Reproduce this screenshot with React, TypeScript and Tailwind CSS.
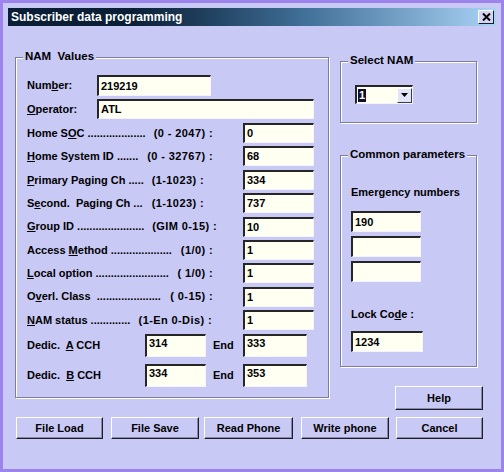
import React from "react";

const face = "bg-[#c9c9f6]";

const Field = ({ value, className, top }: { value?: string; className: string; top?: boolean }) => (
  <div
    className={`${className} flex ${top ? "items-start pt-[1px]" : "items-center"} bg-[#fffff2] border-t-2 border-l-2 border-r border-b border-t-[#262626] border-l-[#262626] border-r-[#f4f4fc] border-b-[#f4f4fc] pl-[2px] leading-[13px]`}
  >
    {value}
  </div>
);

const Group = ({ title, className, children }: { title: string; className: string; children?: React.ReactNode }) => (
  <div
    className={`${className} relative border border-[#7c7c9c] shadow-[1px_1px_0_#ffffff,inset_1px_1px_0_#ffffff]`}
  >
    <span className={`absolute -top-[9px] left-[7px] px-[2px] ${face} text-[11.5px] leading-[14px] whitespace-pre`}>
      {title}
    </span>
    {children}
  </div>
);

const Btn = ({ label, className }: { label: string; className: string }) => (
  <button
    className={`${className} ${face} flex items-center justify-center border border-t-white border-l-white border-r-[#1c1c28] border-b-[#1c1c28] shadow-[inset_-1px_-1px_0_#8a8aa8] text-[11px] font-bold leading-[13px]`}
  >
    {label}
  </button>
);

interface RangeRowProps {
  name: React.ReactNode;
  dots: string;
  range: string;
  value: string;
  w?: string;
}

const RangeRow = ({ name, dots, range, value, w = "w-[186px]" }: RangeRowProps) => (
  <div className="h-[23.4px] flex items-start">
    <div className="w-[216px] h-[20px] flex items-center">
      <div className={`${w} flex justify-between`}>
        <span className="whitespace-pre">
          {name}
          {dots}
        </span>
        <span className="whitespace-pre tracking-[0.4px]">{range}</span>
      </div>
    </div>
    <Field value={value} className="w-[71px] h-[20px]" />
  </div>
);

export default function App() {
  return (
    <div
      className={`w-[504px] h-[472px] ${face} border-[3px] border-[#9c84ec] font-['Liberation_Sans',Arial,sans-serif] text-[11px] font-bold text-black flex flex-col overflow-hidden`}
    >
      {/* title bar */}
      <div className="mx-[5px] mt-[5px] h-[18px] shrink-0 flex items-center justify-between bg-gradient-to-r from-[#0a1f36] from-25% via-[#3f6e96] via-60% to-[#aad4f6] pl-[3px] pr-[2px]">
        <span className="text-white text-[12px] leading-[14px]">Subscriber data programming</span>
        <div className="w-[16px] h-[14px] bg-[#d4d4f4] flex items-center justify-center border border-t-white border-l-white border-r-[#1c1c28] border-b-[#1c1c28]">
          <svg width="9" height="8" viewBox="0 0 9 8">
            <path d="M1 0.5 L8 7.5 M8 0.5 L1 7.5" stroke="#000" strokeWidth="2" />
          </svg>
        </div>
      </div>

      <div className="flex items-start ml-[12px] mt-[31px]">
        {/* NAM values */}
        <Group title="NAM  Values" className="w-[314px] h-[341px] shrink-0">
          <div className="pl-[11px] pt-[17px] flex flex-col">
            <div className="flex items-center">
              <span className="w-[70px]">
                Num<u>b</u>er:
              </span>
              <Field value="219219" className="w-[114px] h-[21px]" />
            </div>
            <div className="flex items-center mt-[3px]">
              <span className="w-[70px]">
                <u>O</u>perator:
              </span>
              <Field value="ATL" className="w-[217px] h-[20px]" />
            </div>
            <div className="mt-[4px] flex flex-col">
              <RangeRow name={<>Home S<u>O</u>C</>} dots=" ..................." range="(0 - 2047) :" value="0" />
              <RangeRow name={<><u>H</u>ome System ID</>} dots=" ......." range="(0 - 32767) :" value="68" />
              <RangeRow name={<><u>P</u>rimary Paging Ch</>} dots=" ....." range="(1-1023) :" value="334" w="w-[177px]" />
              <RangeRow name={<>S<u>e</u>cond.  Paging Ch</>} dots=" ..." range="(1-1023) :" value="737" w="w-[177px]" />
              <RangeRow name={<><u>G</u>roup ID</>} dots=" ......................" range="(GIM 0-15) :" value="10" w="w-[190px]" />
              <RangeRow name={<>Access <u>M</u>ethod</>} dots=" ...................." range="(1/0) :" value="1" />
              <RangeRow name={<><u>L</u>ocal option</>} dots=" ........................" range="( 1/0) :" value="1" />
              <RangeRow name={<>O<u>v</u>erl. Class</>} dots="  ....................." range="( 0-15) :" value="1" />
              <RangeRow name={<><u>N</u>AM status</>} dots=" ............." range="(1-En 0-Dis) :" value="1" w="w-[185px]" />
            </div>
            <div className="flex items-center h-[23px] mt-[0.4px]">
              <span className="w-[118px] whitespace-pre">
                Dedic.  <u>A</u> CCH
              </span>
              <Field value="314" className="w-[61px] h-[23px]" top />
              <span className="w-[37px] pl-[7px]">End</span>
              <Field value="333" className="w-[64px] h-[23px]" top />
            </div>
            <div className="flex items-center h-[23px] mt-[7px]">
              <span className="w-[118px] whitespace-pre">
                Dedic.  <u>B</u> CCH
              </span>
              <Field value="334" className="w-[61px] h-[23px]" top />
              <span className="w-[37px] pl-[7px]">End</span>
              <Field value="353" className="w-[64px] h-[23px]" top />
            </div>
          </div>
        </Group>

        {/* right column */}
        <div className="ml-[11px] mt-[4px] w-[143px] flex flex-col">
          <Group title="Select NAM" className="w-[137px] h-[62px]">
            <div className="pl-[14px] pt-[23px]">
              <div className="w-[58px] h-[19px] flex items-center justify-between bg-[#fffff2] border-t-2 border-l-2 border-r border-b border-t-[#262626] border-l-[#262626] border-r-[#f4f4fc] border-b-[#f4f4fc]">
                <span className="ml-[1px] h-[13px] px-[1px] bg-[#10102a] text-white leading-[13px]">1</span>
                <div className="w-[15px] h-[15px] bg-[#e4e4f8] flex items-center justify-center border border-t-white border-l-white border-r-[#3a3a4a] border-b-[#3a3a4a]">
                  <svg width="7" height="4" viewBox="0 0 7 4">
                    <path d="M0 0 H7 L3.5 4 Z" fill="#000" />
                  </svg>
                </div>
              </div>
            </div>
          </Group>

          <Group title="Common parameters" className="w-[137px] h-[212px] mt-[32px]">
            <div className="pl-[10px] pt-[30px] flex flex-col">
              <span className="leading-[13px]">
                Emer<u>g</u>ency numbers
              </span>
              <div className="mt-[12px] flex flex-col gap-[4px]">
                <Field value="190" className="w-[70px] h-[21px]" />
                <Field className="w-[70px] h-[21px]" />
                <Field className="w-[70px] h-[21px]" />
              </div>
              <span className="mt-[26px] leading-[13px]">
                Lock Co<u>d</u>e :
              </span>
              <Field value="1234" className="w-[72px] h-[21px] mt-[10px]" />
            </div>
          </Group>

          <Btn label="Help" className="self-end w-[88px] h-[24px] mt-[19px]" />
        </div>
      </div>

      {/* bottom buttons */}
      <div className="flex ml-[13px] mt-[7px]">
        <Btn label="File Load" className="w-[87px] h-[22px]" />
        <Btn label="File Save" className="w-[88px] h-[22px] ml-[8px]" />
        <Btn label="Read Phone" className="w-[89px] h-[22px] ml-[5px]" />
        <Btn label="Write phone" className="w-[88px] h-[22px] ml-[8px]" />
        <Btn label="Cancel" className="w-[87px] h-[22px] ml-[7px]" />
      </div>
    </div>
  );
}
